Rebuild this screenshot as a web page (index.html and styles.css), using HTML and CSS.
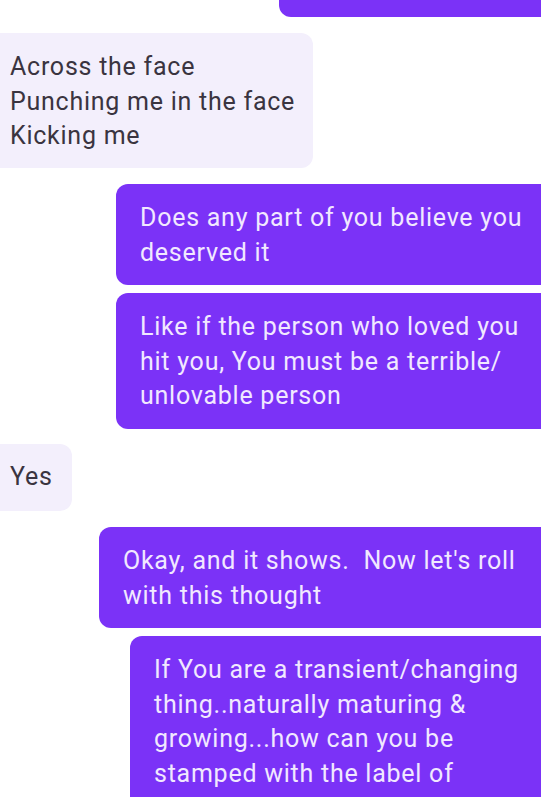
FILE: index.html
```html
<!DOCTYPE html>
<html>
<head>
<meta charset="utf-8">
<link rel="stylesheet" href="styles.css">
</head>
<body>
<div class="chat">
  <div class="msg out top"></div>
  <div class="msg in in-wide">Across the face<br>Punching me in the face<br>Kicking me</div>
  <div class="msg out o1 group-start">Does any part of you believe you<br>deserved it</div>
  <div class="msg out o1">Like if the person who loved you<br>hit you, You must be a terrible/<br>unlovable person</div>
  <div class="msg in in-short group-start">Yes</div>
  <div class="msg out o3 group-start">Okay, and it shows.&nbsp; Now let's roll<br>with this thought</div>
  <div class="msg out o4">If You are a transient/changing<br>thing..naturally maturing &amp;<br>growing...how can you be<br>stamped with the label of</div>
</div>
</body>
</html>
```
FILE: styles.css
```css
html, body {
  margin: 0;
  padding: 0;
  background: #ffffff;
  overflow: hidden;
}
.chat {
  display: flex;
  flex-direction: column;
  gap: 8px;
  width: 541px;
  font-family: Roboto, "Liberation Sans", sans-serif;
  font-size: 25px;
  letter-spacing: 0.75px;
  line-height: 34.5px;
}
.msg {
  padding: 17px 24px 15px;
  border-radius: 12px;
  white-space: nowrap;
}
.group-start {
  margin-top: 8px;
}
.in {
  background: #f3effc;
  color: #3a3440;
  margin-left: -14px;
  align-self: flex-start;
}
.in-wide {
  width: 279px;
  margin-top: 8px;
  height: 103px;
}
.in-short {
  width: 38px;
  padding-top: 16px;
  padding-bottom: 17px;
  margin-top: 7px;
}
.out {
  background: #7b32f7;
  color: #f1e8ff;
  margin-right: -20px;
}
.top {
  margin-top: -40px;
  margin-left: 279px;
  height: 25px;
}
.o1 { margin-left: 116px; }
.o3 { margin-left: 99px; }
.o4 { margin-left: 130px; padding-bottom: 40px; }
```
